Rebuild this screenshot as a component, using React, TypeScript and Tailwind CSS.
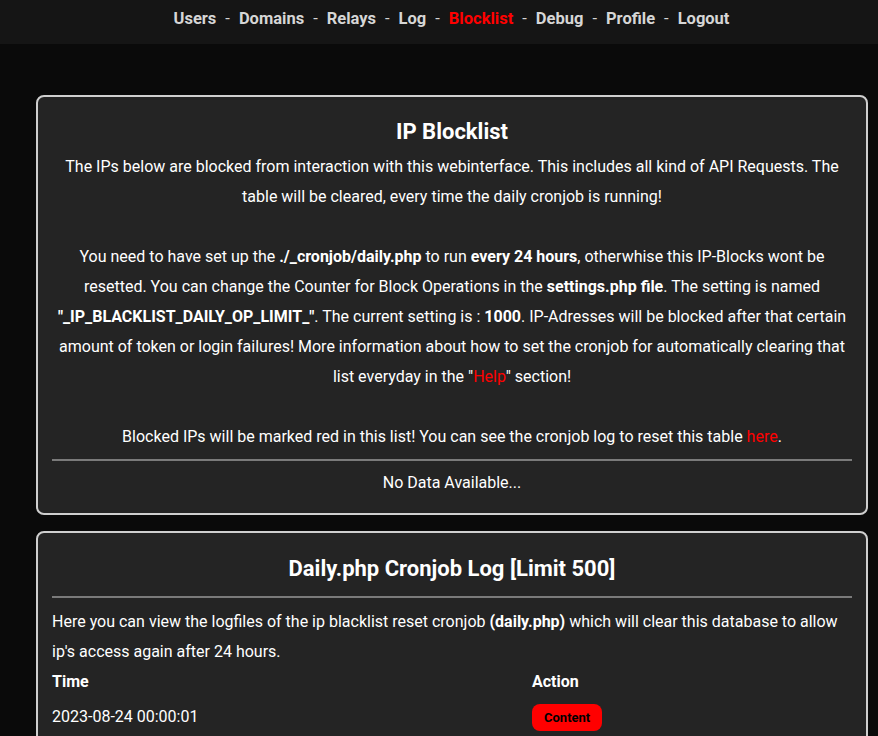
import React from "react";

const navItems = ["Users", "Domains", "Relays", "Log", "Blocklist", "Debug", "Profile", "Logout"];

function Nav() {
  return (
    <div className="flex h-[44px] items-center justify-center bg-[#151515] pb-[6px] pl-[25px] text-[16.5px] font-bold text-[#d6d6d6]">
      {navItems.map((item, i) => (
        <React.Fragment key={item}>
          {i > 0 && <span className="px-[9px] font-normal">-</span>}
          <a className={item === "Blocklist" ? "text-[#ff0000]" : ""}>{item}</a>
        </React.Fragment>
      ))}
    </div>
  );
}

function Card({ children }: { children: React.ReactNode }) {
  return (
    <div className="rounded-[8px] border-2 border-[#cfcfcf] bg-[#242424] px-[14px] pt-[20px] pb-[15px]">
      {children}
    </div>
  );
}

export default function App() {
  return (
    <div
      className="min-h-[736px] bg-[#0a0a0a] text-white"
      style={{ fontFamily: "Roboto, 'Liberation Sans', sans-serif" }}
    >
      <Nav />
      <div className="flex flex-col gap-[16px] pt-[51px] pr-[10px] pl-[36px]">
        <Card>
          <h1 className="text-center text-[22px] leading-[30px] font-bold">IP Blocklist</h1>
          <p className="mt-[5px] text-center text-[16px] leading-[30px]">
            The IPs below are blocked from interaction with this webinterface. This includes all kind of API Requests. The
            table will be cleared, every time the daily cronjob is running!
            <br />
            <br />
            You need to have set up the <b>./_cronjob/daily.php</b> to run <b>every 24 hours</b>, otherwhise this IP-Blocks wont be
            resetted. You can change the Counter for Block Operations in the <b>settings.php file</b>. The setting is named{" "}
            <b>"_IP_BLACKLIST_DAILY_OP_LIMIT_"</b>. The current setting is : <b>1000</b>. IP-Adresses will be blocked after that certain
            amount of token or login failures! More information about how to set the cronjob for automatically clearing that
            list everyday in the "<span className="text-[#ff0000]">Help</span>" section!
            <br />
            <br />
            Blocked IPs will be marked red in this list! You can see the cronjob log to reset this table{" "}
            <span className="text-[#ff0000]">here</span>.
          </p>
          <hr className="mt-[7px] border-t-2 border-[#7a7a7a]" />
          <p className="mt-[7px] text-center text-[16px] leading-[30px]">No Data Available...</p>
        </Card>
        <Card>
          <h2 className="text-center text-[22px] leading-[32px] font-bold">Daily.php Cronjob Log [Limit 500]</h2>
          <hr className="mt-[11px] border-t-2 border-[#7a7a7a]" />
          <p className="mt-[9px] text-[16px] leading-[30px]">
            Here you can view the logfiles of the ip blacklist reset cronjob <b>(daily.php)</b> which will clear this database to allow
            ip's access again after 24 hours.
          </p>
          <table className="w-full text-left text-[16px] leading-[30px]">
            <thead>
              <tr>
                <th className="w-[480px] font-bold">Time</th>
                <th className="font-bold">Action</th>
              </tr>
            </thead>
            <tbody>
              <tr>
                <td className="pt-[5px]">2023-08-24 00:00:01</td>
                <td className="pt-[5px]">
                  <span className="inline-block rounded-[8px] bg-[#ff0000] px-[12px] text-[13px] leading-[27px] font-bold text-black">
                    Content
                  </span>
                </td>
              </tr>
            </tbody>
          </table>
        </Card>
      </div>
    </div>
  );
}
